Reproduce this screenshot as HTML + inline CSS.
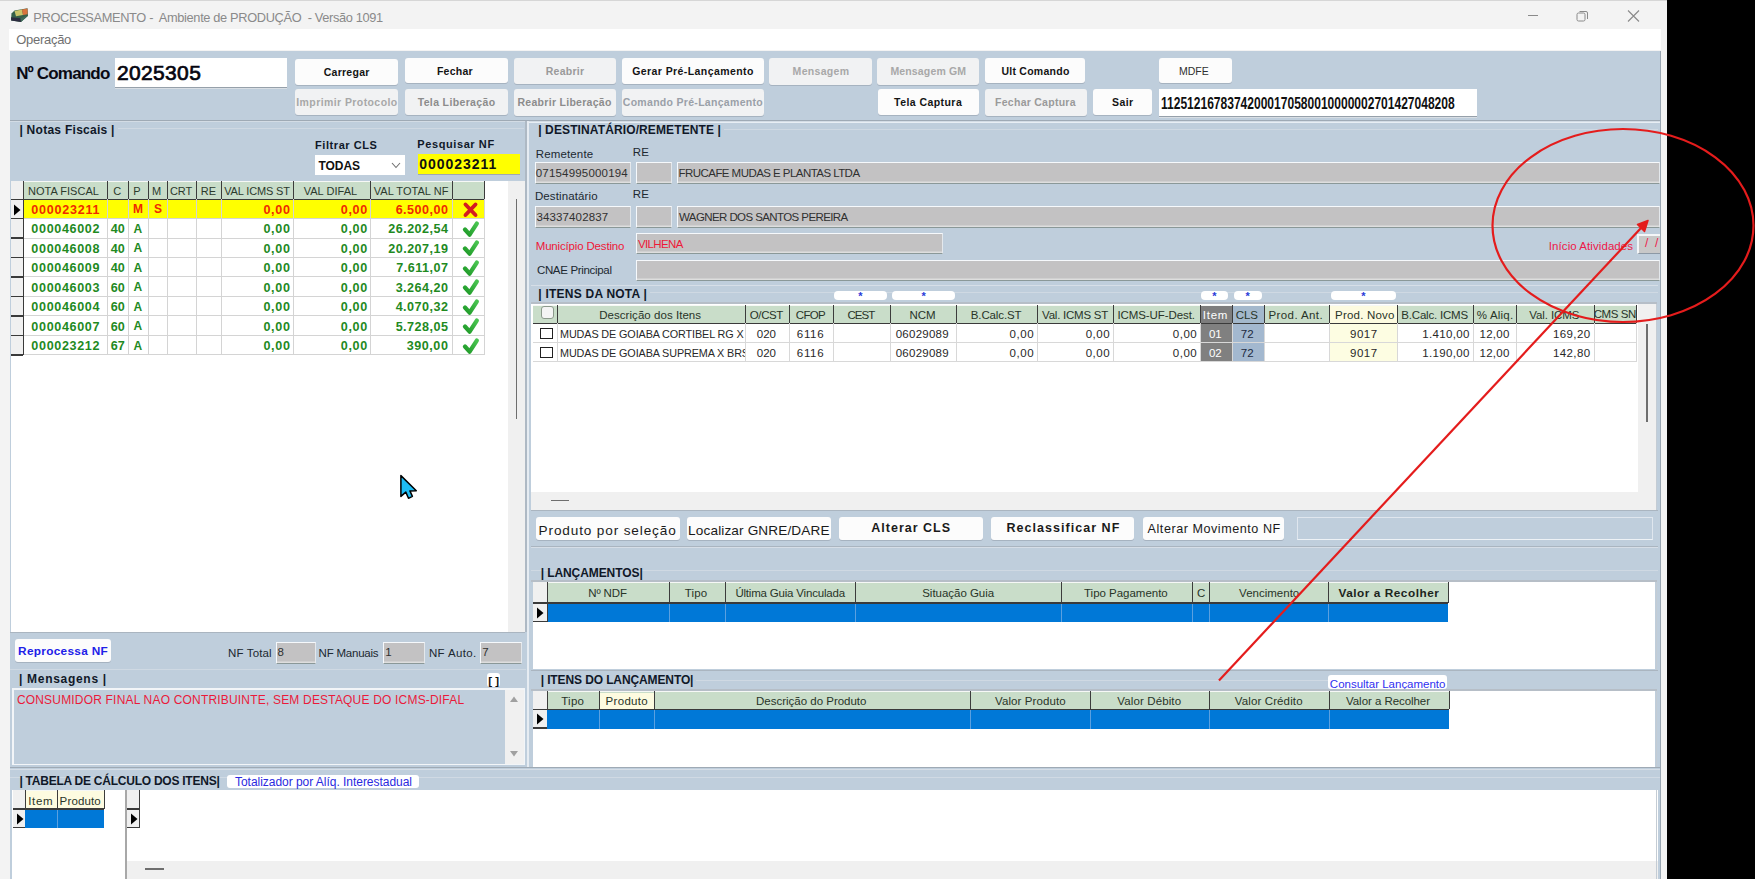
<!DOCTYPE html><html><head><meta charset="utf-8"><style>
html,body{margin:0;padding:0;}
body{width:1755px;height:879px;position:relative;overflow:hidden;background:#000;font-family:"Liberation Sans",sans-serif;}
.a{position:absolute;box-sizing:border-box;}
.t{position:absolute;white-space:pre;}
</style></head><body>
<div class="a" style="left:0px;top:0px;width:1667px;height:879px;background:#f3f3f3;"></div>
<div class="a" style="left:0px;top:0px;width:1667px;height:1px;background:#d6d6d6;"></div>
<div class="a" style="left:1667px;top:0px;width:88px;height:879px;background:#000;"></div>
<svg class="a" style="left:0px;top:0px" width="34" height="26" viewBox="0 0 34 26">
<path d="M11.5 13.5 L14.5 10.5 L27.5 8.3 L28 16 L21 22 L11 20.5 Z" fill="#36604a"/>
<path d="M14.5 11 L22 9.6 L23 15 L16 16.2 Z" fill="#c9c46a"/>
<path d="M22 9.6 L27.5 8.4 L27.6 14.2 L23 15 Z" fill="#d8733c"/>
<path d="M11 17.2 L20.5 18.2 L21 22 L11.2 20.6 Z" fill="#2c2c40"/>
<path d="M20.5 18.2 L27.8 15.5 L21 22 Z" fill="#3f6a5a"/>
</svg>
<span class="t" id="t0" style="left:33.36px;top:10.81px;font-size:12.8px;line-height:14.298px;font-weight:normal;color:#8a8a8a;letter-spacing:-0.345px;white-space:pre;">PROCESSAMENTO -  Ambiente de PRODUÇÃO  - Versão 1091</span>
<div class="a" style="left:1527.5px;top:15px;width:10.5px;height:1px;background:#8a8a8a;"></div>
<svg class="a" style="left:1576px;top:10px" width="13" height="12" viewBox="0 0 13 12"><rect x="1" y="3" width="8" height="8" rx="1.5" fill="none" stroke="#8a8a8a" stroke-width="1"/><path d="M3.5 1.5 H10 a1.5 1.5 0 0 1 1.5 1.5 V9" fill="none" stroke="#8a8a8a" stroke-width="1"/></svg>
<svg class="a" style="left:1627px;top:10px" width="13" height="12" viewBox="0 0 13 12"><path d="M1 0.5 L12 11.5 M12 0.5 L1 11.5" stroke="#8a8a8a" stroke-width="1.1"/></svg>
<div class="a" style="left:9px;top:29px;width:1652px;height:21px;background:#ffffff;"></div>
<span class="t" id="t1" style="left:16.25px;top:32.93px;font-size:13px;line-height:14.521px;font-weight:normal;color:#707070;letter-spacing:-0.289px;">Operação</span>
<div class="a" style="left:10px;top:51px;width:1651px;height:828px;background:#bfcedc;"></div>
<div class="a" style="left:10px;top:120px;width:1651px;height:1px;background:#9faab5;"></div>
<div class="a" style="left:10px;top:121px;width:1651px;height:1px;background:#d3dce5;"></div>
<span class="t" id="t2" style="left:16.15px;top:64.11px;font-size:17px;line-height:18.989px;font-weight:bold;color:#0a0a14;letter-spacing:-0.829px;">Nº Comando</span>
<div class="a" style="left:114.8px;top:57.7px;width:172.7px;height:30.5px;background:#ffffff;border-bottom:1px solid #96a0aa;box-shadow:0 1px 0 #d8dee4;"></div>
<span class="t" id="t3" style="left:116.95px;top:61.39px;font-size:21px;line-height:23.457px;font-weight:normal;color:#050510;letter-spacing:0.354px;-webkit-text-stroke:0.7px #050510;">2025305</span>
<div class="a" style="left:295.2px;top:59px;width:102.90000000000003px;height:25.5px;background:#fcfcfc;border-radius:3px;box-shadow:0 1px 0 rgba(120,130,140,0.35);"></div>
<span class="t" id="t4" style="left:323.78px;top:66.99px;font-size:10.5px;line-height:11.729px;font-weight:bold;color:#141414;letter-spacing:0.252px;">Carregar</span>
<div class="a" style="left:405px;top:58.3px;width:102.80000000000001px;height:24.900000000000006px;background:#fcfcfc;border-radius:3px;box-shadow:0 1px 0 rgba(120,130,140,0.35);"></div>
<span class="t" id="t5" style="left:436.88px;top:66.29px;font-size:10.5px;line-height:11.729px;font-weight:bold;color:#141414;letter-spacing:0.262px;">Fechar</span>
<div class="a" style="left:513.7px;top:57.7px;width:102.19999999999993px;height:26.200000000000003px;background:#f1f2f3;border-radius:3px;box-shadow:0 1px 0 rgba(120,130,140,0.35);"></div>
<span class="t" id="t6" style="left:545.77px;top:66.29px;font-size:10.5px;line-height:11.729px;font-weight:bold;color:#9a9a9a;letter-spacing:0.247px;">Reabrir</span>
<div class="a" style="left:621.9px;top:58px;width:141.70000000000005px;height:25.900000000000006px;background:#fcfcfc;border-radius:3px;box-shadow:0 1px 0 rgba(120,130,140,0.35);"></div>
<span class="t" id="t7" style="left:632.18px;top:66.29px;font-size:10.5px;line-height:11.729px;font-weight:bold;color:#141414;letter-spacing:0.422px;">Gerar Pré-Lançamento</span>
<div class="a" style="left:769.4px;top:57.7px;width:102.30000000000007px;height:26.89999999999999px;background:#f1f2f3;border-radius:3px;box-shadow:0 1px 0 rgba(120,130,140,0.35);"></div>
<span class="t" id="t8" style="left:792.58px;top:66.29px;font-size:10.5px;line-height:11.729px;font-weight:bold;color:#a8a8a8;letter-spacing:0.323px;">Mensagem</span>
<div class="a" style="left:876.9px;top:57.7px;width:102.60000000000002px;height:26.89999999999999px;background:#f1f2f3;border-radius:3px;box-shadow:0 1px 0 rgba(120,130,140,0.35);"></div>
<span class="t" id="t9" style="left:890.38px;top:66.29px;font-size:10.5px;line-height:11.729px;font-weight:bold;color:#a8a8a8;letter-spacing:0.164px;">Mensagem GM</span>
<div class="a" style="left:985.2px;top:58.3px;width:100.0px;height:25.10000000000001px;background:#fcfcfc;border-radius:3px;box-shadow:0 1px 0 rgba(120,130,140,0.35);"></div>
<span class="t" id="t10" style="left:1001.38px;top:66.29px;font-size:10.5px;line-height:11.729px;font-weight:bold;color:#141414;letter-spacing:0.262px;">Ult Comando</span>
<div class="a" style="left:295.2px;top:88.8px;width:102.90000000000003px;height:26.5px;background:#f1f2f3;border-radius:3px;box-shadow:0 1px 0 rgba(120,130,140,0.35);"></div>
<span class="t" id="t11" style="left:296.28px;top:97.19px;font-size:10.5px;line-height:11.729px;font-weight:bold;color:#a8a8a8;letter-spacing:0.412px;">Imprimir Protocolo</span>
<div class="a" style="left:405px;top:88.8px;width:102.80000000000001px;height:26.5px;background:#f1f2f3;border-radius:3px;box-shadow:0 1px 0 rgba(120,130,140,0.35);"></div>
<span class="t" id="t12" style="left:417.68px;top:97.19px;font-size:10.5px;line-height:11.729px;font-weight:bold;color:#8c8c8c;letter-spacing:0.360px;">Tela Liberação</span>
<div class="a" style="left:513.7px;top:89px;width:102.19999999999993px;height:26.700000000000003px;background:#f1f2f3;border-radius:3px;box-shadow:0 1px 0 rgba(120,130,140,0.35);"></div>
<span class="t" id="t13" style="left:517.48px;top:97.29px;font-size:10.5px;line-height:11.729px;font-weight:bold;color:#8c8c8c;letter-spacing:0.291px;">Reabrir Liberação</span>
<div class="a" style="left:621.9px;top:89px;width:141.70000000000005px;height:26.700000000000003px;background:#f1f2f3;border-radius:3px;box-shadow:0 1px 0 rgba(120,130,140,0.35);"></div>
<span class="t" id="t14" style="left:622.77px;top:97.29px;font-size:10.5px;line-height:11.729px;font-weight:bold;color:#9aa0a8;letter-spacing:0.302px;">Comando Pré-Lançamento</span>
<div class="a" style="left:877.9px;top:89.4px;width:100.89999999999998px;height:25.599999999999994px;background:#fcfcfc;border-radius:3px;box-shadow:0 1px 0 rgba(120,130,140,0.35);"></div>
<span class="t" id="t15" style="left:894.08px;top:97.39px;font-size:10.5px;line-height:11.729px;font-weight:bold;color:#141414;letter-spacing:0.438px;">Tela Captura</span>
<div class="a" style="left:985.2px;top:88.8px;width:101.5px;height:26.900000000000006px;background:#f1f2f3;border-radius:3px;box-shadow:0 1px 0 rgba(120,130,140,0.35);"></div>
<span class="t" id="t16" style="left:995.08px;top:97.39px;font-size:10.5px;line-height:11.729px;font-weight:bold;color:#9a9a9a;letter-spacing:0.263px;">Fechar Captura</span>
<div class="a" style="left:1092.9px;top:89.4px;width:59.0px;height:25.599999999999994px;background:#fcfcfc;border-radius:3px;box-shadow:0 1px 0 rgba(120,130,140,0.35);"></div>
<span class="t" id="t17" style="left:1112.07px;top:97.39px;font-size:10.5px;line-height:11.729px;font-weight:bold;color:#141414;letter-spacing:0.362px;">Sair</span>
<div class="a" style="left:1158.5px;top:58.3px;width:73.40000000000009px;height:25.10000000000001px;background:#fcfcfc;border-radius:3px;box-shadow:0 1px 0 rgba(120,130,140,0.35);"></div>
<span class="t" id="t18" style="left:1178.72px;top:65.39px;font-size:11.5px;line-height:12.845px;font-weight:normal;color:#303030;transform:scaleX(0.9126);transform-origin:0 0;">MDFE</span>
<div class="a" style="left:1158.7px;top:89px;width:318.29999999999995px;height:27.700000000000003px;background:#ffffff;border-bottom:1px solid #96a0aa;box-shadow:0 1px 0 #d8dee4;"></div>
<span class="t" id="t19" style="left:1161.20px;top:94.62px;font-size:16px;line-height:17.872px;font-weight:bold;color:#101010;transform:scaleX(0.7518);transform-origin:0 0;">11251216783742000170580010000002701427048208</span>
<span class="t" id="t20" style="left:19.40px;top:123.54px;font-size:12px;line-height:13.404px;font-weight:bold;color:#101828;letter-spacing:0.271px;">| Notas Fiscais |</span>
<div class="a" style="left:118px;top:128px;width:406px;height:1px;background:#cfd9e3;"></div>
<div class="a" style="left:527px;top:122px;width:1133px;height:1px;background:#e8eef4;"></div>
<span class="t" id="t21" style="left:315.05px;top:138.84px;font-size:11px;line-height:12.287px;font-weight:bold;color:#101828;letter-spacing:0.566px;">Filtrar CLS</span>
<span class="t" id="t22" style="left:417.35px;top:137.84px;font-size:11px;line-height:12.287px;font-weight:bold;color:#101828;letter-spacing:0.589px;">Pesquisar NF</span>
<div class="a" style="left:315px;top:155px;width:90px;height:20px;background:#ffffff;"></div>
<span class="t" id="t23" style="left:318.60px;top:159.54px;font-size:12px;line-height:13.404px;font-weight:bold;color:#101010;letter-spacing:-0.104px;">TODAS</span>
<svg class="a" style="left:391px;top:162px" width="10" height="7" viewBox="0 0 10 7"><path d="M1 1 L5 5.5 L9 1" fill="none" stroke="#707070" stroke-width="1.1"/></svg>
<div class="a" style="left:417.5px;top:153.5px;width:102.5px;height:21.5px;background:#ffff00;border-bottom:1px solid #a0a8b0;"></div>
<span class="t" id="t24" style="left:419.20px;top:156.93px;font-size:14px;line-height:15.638px;font-weight:bold;color:#101010;letter-spacing:0.981px;">000023211</span>
<div class="a" style="left:11px;top:180.5px;width:497px;height:451.0px;background:#ffffff;"></div>
<div class="a" style="left:508px;top:180.5px;width:17.299999999999955px;height:451.0px;background:#f0f0f0;"></div>
<div class="a" style="left:515.7px;top:199px;width:1.7000000000000455px;height:220px;background:#6e6e6e;"></div>
<div class="a" style="left:525.3px;top:121px;width:1.5px;height:510.5px;background:#aeb9c4;"></div>
<div class="a" style="left:527px;top:121px;width:2px;height:646px;background:#e6ecf2;"></div>
<div class="a" style="left:10.7px;top:180.5px;width:12.8px;height:174.0px;background:#f0f0f0;"></div>
<div class="a" style="left:23.5px;top:180.5px;width:460.5px;height:18.5px;background:#c9ddc9;border-top:1.5px solid #f6f8f6;"></div>
<div class="a" style="left:10.7px;top:198.5px;width:473.3px;height:1.5px;background:#3a3a3a;"></div>
<div class="a" style="left:23.0px;top:180.5px;width:1.1999999999999993px;height:18.5px;background:#3c3c3c;"></div>
<div class="a" style="left:107.0px;top:180.5px;width:1.2000000000000028px;height:18.5px;background:#3c3c3c;"></div>
<div class="a" style="left:127.5px;top:180.5px;width:1.1999999999999886px;height:18.5px;background:#3c3c3c;"></div>
<div class="a" style="left:147.5px;top:180.5px;width:1.1999999999999886px;height:18.5px;background:#3c3c3c;"></div>
<div class="a" style="left:167.0px;top:180.5px;width:1.1999999999999886px;height:18.5px;background:#3c3c3c;"></div>
<div class="a" style="left:196.0px;top:180.5px;width:1.1999999999999886px;height:18.5px;background:#3c3c3c;"></div>
<div class="a" style="left:220.5px;top:180.5px;width:1.1999999999999886px;height:18.5px;background:#3c3c3c;"></div>
<div class="a" style="left:293.0px;top:180.5px;width:1.1999999999999886px;height:18.5px;background:#3c3c3c;"></div>
<div class="a" style="left:370.0px;top:180.5px;width:1.1999999999999886px;height:18.5px;background:#3c3c3c;"></div>
<div class="a" style="left:451.5px;top:180.5px;width:1.1999999999999886px;height:18.5px;background:#3c3c3c;"></div>
<div class="a" style="left:483.5px;top:180.5px;width:1.1999999999999886px;height:18.5px;background:#3c3c3c;"></div>
<span class="t" id="t25" style="left:27.95px;top:185.44px;font-size:11px;line-height:12.287px;font-weight:normal;color:#2c3a2c;letter-spacing:0.029px;">NOTA FISCAL</span>
<span class="t" id="t26" style="left:113.27px;top:185.44px;font-size:11px;line-height:12.287px;font-weight:normal;color:#2c3a2c;letter-spacing:0.000px;">C</span>
<span class="t" id="t27" style="left:133.32px;top:185.44px;font-size:11px;line-height:12.287px;font-weight:normal;color:#2c3a2c;letter-spacing:0.000px;">P</span>
<span class="t" id="t28" style="left:151.91px;top:185.44px;font-size:11px;line-height:12.287px;font-weight:normal;color:#2c3a2c;letter-spacing:0.000px;">M</span>
<span class="t" id="t29" style="left:169.88px;top:185.44px;font-size:11px;line-height:12.287px;font-weight:normal;color:#2c3a2c;letter-spacing:0.000px;">CRT</span>
<span class="t" id="t30" style="left:200.75px;top:185.44px;font-size:11px;line-height:12.287px;font-weight:normal;color:#2c3a2c;letter-spacing:0.000px;">RE</span>
<span class="t" id="t31" style="left:224.25px;top:185.44px;font-size:11px;line-height:12.287px;font-weight:normal;color:#2c3a2c;letter-spacing:-0.156px;">VAL ICMS ST</span>
<span class="t" id="t32" style="left:303.65px;top:185.44px;font-size:11px;line-height:12.287px;font-weight:normal;color:#2c3a2c;letter-spacing:0.048px;">VAL DIFAL</span>
<span class="t" id="t33" style="left:373.75px;top:185.44px;font-size:11px;line-height:12.287px;font-weight:normal;color:#2c3a2c;letter-spacing:0.047px;">VAL TOTAL NF</span>
<div class="a" style="left:23.5px;top:199.5px;width:460.5px;height:18.639999999999986px;background:#ffff00;"></div>
<div class="a" style="left:23.5px;top:218.14px;width:460.5px;height:1.0px;background:#d4d4d4;"></div>
<div class="a" style="left:10.7px;top:217.94px;width:12.8px;height:1.5px;background:#3a3a3a;"></div>
<svg class="a" style="left:13px;top:203.5px" width="8" height="12" viewBox="0 0 8 12"><path d="M1 0.5 L7.5 6 L1 11.5 Z" fill="#000"/></svg>
<span class="t" id="t34" style="left:31.37px;top:202.89px;font-size:12.6px;line-height:14.074px;font-weight:bold;color:#f02a00;letter-spacing:0.724px;">000023211</span>
<span class="t" id="t35" style="left:133.09px;top:203.44px;font-size:12px;line-height:13.404px;font-weight:bold;color:#f02a00;letter-spacing:0.000px;">M</span>
<span class="t" id="t36" style="left:153.98px;top:203.44px;font-size:12px;line-height:13.404px;font-weight:bold;color:#f02a00;letter-spacing:0.000px;">S</span>
<span class="t" id="t37" style="left:263.45px;top:202.89px;font-size:12.6px;line-height:14.074px;font-weight:bold;color:#f02a00;letter-spacing:0.680px;">0,00</span>
<span class="t" id="t38" style="left:340.75px;top:202.89px;font-size:12.6px;line-height:14.074px;font-weight:bold;color:#f02a00;letter-spacing:0.680px;">0,00</span>
<span class="t" id="t39" style="left:395.63px;top:202.89px;font-size:12.6px;line-height:14.074px;font-weight:bold;color:#f02a00;letter-spacing:0.463px;">6.500,00</span>
<svg class="a" style="left:460px;top:199.5px" width="20" height="20" viewBox="0 0 20 20"><path d="M5.5 4.5 L15.5 15 M15.5 4.5 L5.5 15" stroke="#d41c20" stroke-width="3.9" stroke-linecap="round"/></svg>
<div class="a" style="left:23.5px;top:237.57999999999998px;width:460.5px;height:1.0px;background:#d4d4d4;"></div>
<div class="a" style="left:10.7px;top:237.38px;width:12.8px;height:1.5px;background:#3a3a3a;"></div>
<span class="t" id="t40" style="left:31.37px;top:222.33px;font-size:12.6px;line-height:14.074px;font-weight:bold;color:#1f8a1f;letter-spacing:0.636px;">000046002</span>
<span class="t" id="t41" style="left:110.73px;top:222.33px;font-size:12.6px;line-height:14.074px;font-weight:bold;color:#1f8a1f;letter-spacing:0.000px;">40</span>
<span class="t" id="t42" style="left:133.50px;top:222.88px;font-size:12px;line-height:13.404px;font-weight:bold;color:#1f8a1f;letter-spacing:0.000px;">A</span>
<span class="t" id="t43" style="left:263.45px;top:222.33px;font-size:12.6px;line-height:14.074px;font-weight:bold;color:#1f8a1f;letter-spacing:0.680px;">0,00</span>
<span class="t" id="t44" style="left:340.75px;top:222.33px;font-size:12.6px;line-height:14.074px;font-weight:bold;color:#1f8a1f;letter-spacing:0.680px;">0,00</span>
<span class="t" id="t45" style="left:388.32px;top:222.33px;font-size:12.6px;line-height:14.074px;font-weight:bold;color:#1f8a1f;letter-spacing:0.444px;">26.202,54</span>
<svg class="a" style="left:460px;top:218.9px" width="20" height="20" viewBox="0 0 20 20"><defs><linearGradient id="gk1" x1="0" y1="1" x2="1" y2="0"><stop offset="0" stop-color="#1f9a28"/><stop offset="1" stop-color="#48c450"/></linearGradient></defs><path d="M5 10.5 L9.6 15.6 L16.8 4.6" fill="none" stroke="url(#gk1)" stroke-width="4.3" stroke-linecap="round" stroke-linejoin="round"/></svg>
<div class="a" style="left:23.5px;top:257.02px;width:460.5px;height:1.0px;background:#d4d4d4;"></div>
<div class="a" style="left:10.7px;top:256.82px;width:12.8px;height:1.5px;background:#3a3a3a;"></div>
<span class="t" id="t46" style="left:31.37px;top:241.77px;font-size:12.6px;line-height:14.074px;font-weight:bold;color:#1f8a1f;letter-spacing:0.636px;">000046008</span>
<span class="t" id="t47" style="left:110.73px;top:241.77px;font-size:12.6px;line-height:14.074px;font-weight:bold;color:#1f8a1f;letter-spacing:0.000px;">40</span>
<span class="t" id="t48" style="left:133.50px;top:242.32px;font-size:12px;line-height:13.404px;font-weight:bold;color:#1f8a1f;letter-spacing:0.000px;">A</span>
<span class="t" id="t49" style="left:263.45px;top:241.77px;font-size:12.6px;line-height:14.074px;font-weight:bold;color:#1f8a1f;letter-spacing:0.680px;">0,00</span>
<span class="t" id="t50" style="left:340.75px;top:241.77px;font-size:12.6px;line-height:14.074px;font-weight:bold;color:#1f8a1f;letter-spacing:0.680px;">0,00</span>
<span class="t" id="t51" style="left:388.32px;top:241.77px;font-size:12.6px;line-height:14.074px;font-weight:bold;color:#1f8a1f;letter-spacing:0.444px;">20.207,19</span>
<svg class="a" style="left:460px;top:238.4px" width="20" height="20" viewBox="0 0 20 20"><defs><linearGradient id="gk2" x1="0" y1="1" x2="1" y2="0"><stop offset="0" stop-color="#1f9a28"/><stop offset="1" stop-color="#48c450"/></linearGradient></defs><path d="M5 10.5 L9.6 15.6 L16.8 4.6" fill="none" stroke="url(#gk2)" stroke-width="4.3" stroke-linecap="round" stroke-linejoin="round"/></svg>
<div class="a" style="left:23.5px;top:276.46px;width:460.5px;height:1.0px;background:#d4d4d4;"></div>
<div class="a" style="left:10.7px;top:276.26px;width:12.8px;height:1.5px;background:#3a3a3a;"></div>
<span class="t" id="t52" style="left:31.37px;top:261.21px;font-size:12.6px;line-height:14.074px;font-weight:bold;color:#1f8a1f;letter-spacing:0.636px;">000046009</span>
<span class="t" id="t53" style="left:110.73px;top:261.21px;font-size:12.6px;line-height:14.074px;font-weight:bold;color:#1f8a1f;letter-spacing:0.000px;">40</span>
<span class="t" id="t54" style="left:133.50px;top:261.76px;font-size:12px;line-height:13.404px;font-weight:bold;color:#1f8a1f;letter-spacing:0.000px;">A</span>
<span class="t" id="t55" style="left:263.45px;top:261.21px;font-size:12.6px;line-height:14.074px;font-weight:bold;color:#1f8a1f;letter-spacing:0.680px;">0,00</span>
<span class="t" id="t56" style="left:340.75px;top:261.21px;font-size:12.6px;line-height:14.074px;font-weight:bold;color:#1f8a1f;letter-spacing:0.680px;">0,00</span>
<span class="t" id="t57" style="left:396.32px;top:261.21px;font-size:12.6px;line-height:14.074px;font-weight:bold;color:#1f8a1f;letter-spacing:0.465px;">7.611,07</span>
<svg class="a" style="left:460px;top:257.8px" width="20" height="20" viewBox="0 0 20 20"><defs><linearGradient id="gk3" x1="0" y1="1" x2="1" y2="0"><stop offset="0" stop-color="#1f9a28"/><stop offset="1" stop-color="#48c450"/></linearGradient></defs><path d="M5 10.5 L9.6 15.6 L16.8 4.6" fill="none" stroke="url(#gk3)" stroke-width="4.3" stroke-linecap="round" stroke-linejoin="round"/></svg>
<div class="a" style="left:23.5px;top:295.9px;width:460.5px;height:1.0px;background:#d4d4d4;"></div>
<div class="a" style="left:10.7px;top:295.7px;width:12.8px;height:1.5px;background:#3a3a3a;"></div>
<span class="t" id="t58" style="left:31.37px;top:280.65px;font-size:12.6px;line-height:14.074px;font-weight:bold;color:#1f8a1f;letter-spacing:0.636px;">000046003</span>
<span class="t" id="t59" style="left:110.73px;top:280.65px;font-size:12.6px;line-height:14.074px;font-weight:bold;color:#1f8a1f;letter-spacing:0.000px;">60</span>
<span class="t" id="t60" style="left:133.50px;top:281.20px;font-size:12px;line-height:13.404px;font-weight:bold;color:#1f8a1f;letter-spacing:0.000px;">A</span>
<span class="t" id="t61" style="left:263.45px;top:280.65px;font-size:12.6px;line-height:14.074px;font-weight:bold;color:#1f8a1f;letter-spacing:0.680px;">0,00</span>
<span class="t" id="t62" style="left:340.75px;top:280.65px;font-size:12.6px;line-height:14.074px;font-weight:bold;color:#1f8a1f;letter-spacing:0.680px;">0,00</span>
<span class="t" id="t63" style="left:395.63px;top:280.65px;font-size:12.6px;line-height:14.074px;font-weight:bold;color:#1f8a1f;letter-spacing:0.463px;">3.264,20</span>
<svg class="a" style="left:460px;top:277.3px" width="20" height="20" viewBox="0 0 20 20"><defs><linearGradient id="gk4" x1="0" y1="1" x2="1" y2="0"><stop offset="0" stop-color="#1f9a28"/><stop offset="1" stop-color="#48c450"/></linearGradient></defs><path d="M5 10.5 L9.6 15.6 L16.8 4.6" fill="none" stroke="url(#gk4)" stroke-width="4.3" stroke-linecap="round" stroke-linejoin="round"/></svg>
<div class="a" style="left:23.5px;top:315.34px;width:460.5px;height:1.0px;background:#d4d4d4;"></div>
<div class="a" style="left:10.7px;top:315.14px;width:12.8px;height:1.5px;background:#3a3a3a;"></div>
<span class="t" id="t64" style="left:31.37px;top:300.09px;font-size:12.6px;line-height:14.074px;font-weight:bold;color:#1f8a1f;letter-spacing:0.636px;">000046004</span>
<span class="t" id="t65" style="left:110.73px;top:300.09px;font-size:12.6px;line-height:14.074px;font-weight:bold;color:#1f8a1f;letter-spacing:0.000px;">60</span>
<span class="t" id="t66" style="left:133.50px;top:300.64px;font-size:12px;line-height:13.404px;font-weight:bold;color:#1f8a1f;letter-spacing:0.000px;">A</span>
<span class="t" id="t67" style="left:263.45px;top:300.09px;font-size:12.6px;line-height:14.074px;font-weight:bold;color:#1f8a1f;letter-spacing:0.680px;">0,00</span>
<span class="t" id="t68" style="left:340.75px;top:300.09px;font-size:12.6px;line-height:14.074px;font-weight:bold;color:#1f8a1f;letter-spacing:0.680px;">0,00</span>
<span class="t" id="t69" style="left:395.63px;top:300.09px;font-size:12.6px;line-height:14.074px;font-weight:bold;color:#1f8a1f;letter-spacing:0.463px;">4.070,32</span>
<svg class="a" style="left:460px;top:296.7px" width="20" height="20" viewBox="0 0 20 20"><defs><linearGradient id="gk5" x1="0" y1="1" x2="1" y2="0"><stop offset="0" stop-color="#1f9a28"/><stop offset="1" stop-color="#48c450"/></linearGradient></defs><path d="M5 10.5 L9.6 15.6 L16.8 4.6" fill="none" stroke="url(#gk5)" stroke-width="4.3" stroke-linecap="round" stroke-linejoin="round"/></svg>
<div class="a" style="left:23.5px;top:334.78px;width:460.5px;height:1.0px;background:#d4d4d4;"></div>
<div class="a" style="left:10.7px;top:334.58px;width:12.8px;height:1.5px;background:#3a3a3a;"></div>
<span class="t" id="t70" style="left:31.37px;top:319.53px;font-size:12.6px;line-height:14.074px;font-weight:bold;color:#1f8a1f;letter-spacing:0.636px;">000046007</span>
<span class="t" id="t71" style="left:110.73px;top:319.53px;font-size:12.6px;line-height:14.074px;font-weight:bold;color:#1f8a1f;letter-spacing:0.000px;">60</span>
<span class="t" id="t72" style="left:133.50px;top:320.08px;font-size:12px;line-height:13.404px;font-weight:bold;color:#1f8a1f;letter-spacing:0.000px;">A</span>
<span class="t" id="t73" style="left:263.45px;top:319.53px;font-size:12.6px;line-height:14.074px;font-weight:bold;color:#1f8a1f;letter-spacing:0.680px;">0,00</span>
<span class="t" id="t74" style="left:340.75px;top:319.53px;font-size:12.6px;line-height:14.074px;font-weight:bold;color:#1f8a1f;letter-spacing:0.680px;">0,00</span>
<span class="t" id="t75" style="left:395.63px;top:319.53px;font-size:12.6px;line-height:14.074px;font-weight:bold;color:#1f8a1f;letter-spacing:0.463px;">5.728,05</span>
<svg class="a" style="left:460px;top:316.1px" width="20" height="20" viewBox="0 0 20 20"><defs><linearGradient id="gk6" x1="0" y1="1" x2="1" y2="0"><stop offset="0" stop-color="#1f9a28"/><stop offset="1" stop-color="#48c450"/></linearGradient></defs><path d="M5 10.5 L9.6 15.6 L16.8 4.6" fill="none" stroke="url(#gk6)" stroke-width="4.3" stroke-linecap="round" stroke-linejoin="round"/></svg>
<div class="a" style="left:23.5px;top:354.22px;width:460.5px;height:1.0px;background:#d4d4d4;"></div>
<div class="a" style="left:10.7px;top:354.02000000000004px;width:12.8px;height:1.5px;background:#3a3a3a;"></div>
<span class="t" id="t76" style="left:31.37px;top:338.97px;font-size:12.6px;line-height:14.074px;font-weight:bold;color:#1f8a1f;letter-spacing:0.636px;">000023212</span>
<span class="t" id="t77" style="left:110.73px;top:338.97px;font-size:12.6px;line-height:14.074px;font-weight:bold;color:#1f8a1f;letter-spacing:0.000px;">67</span>
<span class="t" id="t78" style="left:133.50px;top:339.52px;font-size:12px;line-height:13.404px;font-weight:bold;color:#1f8a1f;letter-spacing:0.000px;">A</span>
<span class="t" id="t79" style="left:263.45px;top:338.97px;font-size:12.6px;line-height:14.074px;font-weight:bold;color:#1f8a1f;letter-spacing:0.680px;">0,00</span>
<span class="t" id="t80" style="left:340.75px;top:338.97px;font-size:12.6px;line-height:14.074px;font-weight:bold;color:#1f8a1f;letter-spacing:0.680px;">0,00</span>
<span class="t" id="t81" style="left:406.74px;top:338.97px;font-size:12.6px;line-height:14.074px;font-weight:bold;color:#1f8a1f;letter-spacing:0.527px;">390,00</span>
<svg class="a" style="left:460px;top:335.6px" width="20" height="20" viewBox="0 0 20 20"><defs><linearGradient id="gk7" x1="0" y1="1" x2="1" y2="0"><stop offset="0" stop-color="#1f9a28"/><stop offset="1" stop-color="#48c450"/></linearGradient></defs><path d="M5 10.5 L9.6 15.6 L16.8 4.6" fill="none" stroke="url(#gk7)" stroke-width="4.3" stroke-linecap="round" stroke-linejoin="round"/></svg>
<div class="a" style="left:107.0px;top:199px;width:1.0px;height:155.5px;background:#d4d4d4;"></div>
<div class="a" style="left:127.5px;top:199px;width:1.0px;height:155.5px;background:#d4d4d4;"></div>
<div class="a" style="left:147.5px;top:199px;width:1.0px;height:155.5px;background:#d4d4d4;"></div>
<div class="a" style="left:167.0px;top:199px;width:1.0px;height:155.5px;background:#d4d4d4;"></div>
<div class="a" style="left:196.0px;top:199px;width:1.0px;height:155.5px;background:#d4d4d4;"></div>
<div class="a" style="left:220.5px;top:199px;width:1.0px;height:155.5px;background:#d4d4d4;"></div>
<div class="a" style="left:293.0px;top:199px;width:1.0px;height:155.5px;background:#d4d4d4;"></div>
<div class="a" style="left:370.0px;top:199px;width:1.0px;height:155.5px;background:#d4d4d4;"></div>
<div class="a" style="left:451.5px;top:199px;width:1.0px;height:155.5px;background:#d4d4d4;"></div>
<div class="a" style="left:483.5px;top:199px;width:1.0px;height:155.5px;background:#d4d4d4;"></div>
<div class="a" style="left:23px;top:199px;width:1.1999999999999993px;height:155.5px;background:#3a3a3a;"></div>
<div class="a" style="left:10px;top:631.5px;width:515.3px;height:1.0px;background:#aab5c0;"></div>
<div class="a" style="left:14.5px;top:638.7px;width:96.5px;height:23.59999999999991px;background:#fcfcfc;border-radius:3px;box-shadow:0 1px 0 rgba(120,130,140,0.35);"></div>
<span class="t" id="t82" style="left:18.11px;top:645.42px;font-size:11.8px;line-height:13.181px;font-weight:bold;color:#2020e8;letter-spacing:0.306px;">Reprocessa NF</span>
<span class="t" id="t83" style="left:228.03px;top:646.59px;font-size:11.5px;line-height:12.845px;font-weight:normal;color:#202830;letter-spacing:0.147px;">NF Total</span>
<div class="a" style="left:275.5px;top:641.7px;width:40.19999999999999px;height:22.299999999999955px;background:#c3c2c3;border-top:1.6px solid #f6f9fc;border-left:1.6px solid #f6f9fc;border-bottom:1px solid #8a9898;border-right:1px solid #e4e8ec;box-shadow:inset 0 -1.5px 0 #dedede;"></div>
<span class="t" id="t84" style="left:277.39px;top:645.89px;font-size:11.5px;line-height:12.845px;font-weight:normal;color:#303030;letter-spacing:0.000px;">8</span>
<span class="t" id="t85" style="left:318.62px;top:646.59px;font-size:11.5px;line-height:12.845px;font-weight:normal;color:#202830;letter-spacing:-0.229px;">NF Manuais</span>
<div class="a" style="left:383px;top:641.7px;width:42.39999999999998px;height:22.299999999999955px;background:#c3c2c3;border-top:1.6px solid #f6f9fc;border-left:1.6px solid #f6f9fc;border-bottom:1px solid #8a9898;border-right:1px solid #e4e8ec;box-shadow:inset 0 -1.5px 0 #dedede;"></div>
<span class="t" id="t86" style="left:385.24px;top:645.89px;font-size:11.5px;line-height:12.845px;font-weight:normal;color:#303030;letter-spacing:0.000px;">1</span>
<span class="t" id="t87" style="left:428.93px;top:646.59px;font-size:11.5px;line-height:12.845px;font-weight:normal;color:#202830;letter-spacing:0.355px;">NF Auto.</span>
<div class="a" style="left:479.8px;top:641.7px;width:41.900000000000034px;height:22.299999999999955px;background:#c3c2c3;border-top:1.6px solid #f6f9fc;border-left:1.6px solid #f6f9fc;border-bottom:1px solid #8a9898;border-right:1px solid #e4e8ec;box-shadow:inset 0 -1.5px 0 #dedede;"></div>
<span class="t" id="t88" style="left:482.24px;top:645.89px;font-size:11.5px;line-height:12.845px;font-weight:normal;color:#303030;letter-spacing:0.000px;">7</span>
<div class="a" style="left:10px;top:668.5px;width:516px;height:1.0px;background:#cfd9e3;"></div>
<span class="t" id="t89" style="left:19.00px;top:673.34px;font-size:12px;line-height:13.404px;font-weight:bold;color:#101828;letter-spacing:0.702px;">| Mensagens |</span>
<div class="a" style="left:487px;top:672.7px;width:13px;height:14.099999999999909px;background:#ffffff;border-radius:3px;"></div>
<span class="t" id="t90" style="left:488.26px;top:674.89px;font-size:11.5px;line-height:12.845px;font-weight:bold;color:#101010;letter-spacing:0.000px;white-space:pre;">[ ]</span>
<div class="a" style="left:12px;top:688px;width:513px;height:77px;background:#f2f5f8;"></div>
<div class="a" style="left:13.5px;top:689.5px;width:491.0px;height:74.5px;background:#bfcedc;"></div>
<div class="a" style="left:504.5px;top:689.5px;width:19.5px;height:74.5px;background:#f0f0f0;"></div>
<svg class="a" style="left:509px;top:695px" width="10" height="8" viewBox="0 0 10 8"><path d="M1 7 L5 1.5 L9 7 Z" fill="#a0a0a0"/></svg>
<svg class="a" style="left:509px;top:750px" width="10" height="8" viewBox="0 0 10 8"><path d="M1 1 L5 6.5 L9 1 Z" fill="#a0a0a0"/></svg>
<span class="t" id="t91" style="left:16.90px;top:693.94px;font-size:12px;line-height:13.404px;font-weight:normal;color:#ea1a3a;letter-spacing:0.186px;">CONSUMIDOR FINAL NAO CONTRIBUINTE, SEM DESTAQUE DO ICMS-DIFAL</span>
<div class="a" style="left:1659.5px;top:51px;width:1.2000000000000455px;height:828px;background:#9aa6b2;"></div>
<span class="t" id="t92" style="left:538.20px;top:124.44px;font-size:12px;line-height:13.404px;font-weight:bold;color:#101828;letter-spacing:0.117px;">| DESTINATÁRIO/REMETENTE |</span>
<div class="a" style="left:724px;top:129px;width:934px;height:1px;background:#cfd9e3;"></div>
<span class="t" id="t93" style="left:535.72px;top:148.49px;font-size:11.5px;line-height:12.845px;font-weight:normal;color:#202830;letter-spacing:0.146px;">Remetente</span>
<span class="t" id="t94" style="left:632.85px;top:146.29px;font-size:11.5px;line-height:12.845px;font-weight:normal;color:#202830;letter-spacing:0.000px;">RE</span>
<div class="a" style="left:534.5px;top:162px;width:96.5px;height:21.5px;background:#c3c2c3;border-top:1.6px solid #f6f9fc;border-left:1.6px solid #f6f9fc;border-bottom:1px solid #8a9898;border-right:1px solid #e4e8ec;box-shadow:inset 0 -1.5px 0 #dedede;"></div>
<div class="a" style="left:636px;top:162px;width:36px;height:21.5px;background:#c3c2c3;border-top:1.6px solid #f6f9fc;border-left:1.6px solid #f6f9fc;border-bottom:1px solid #8a9898;border-right:1px solid #e4e8ec;box-shadow:inset 0 -1.5px 0 #dedede;"></div>
<div class="a" style="left:677px;top:162px;width:983px;height:21.5px;background:#c3c2c3;border-top:1.6px solid #f6f9fc;border-left:1.6px solid #f6f9fc;border-bottom:1px solid #8a9898;border-right:1px solid #e4e8ec;box-shadow:inset 0 -1.5px 0 #dedede;"></div>
<span class="t" id="t95" style="left:535.72px;top:166.79px;font-size:11.5px;line-height:12.845px;font-weight:normal;color:#303030;letter-spacing:0.191px;">07154995000194</span>
<span class="t" id="t96" style="left:678.52px;top:166.79px;font-size:11.5px;line-height:12.845px;font-weight:normal;color:#303030;letter-spacing:-0.550px;">FRUCAFE MUDAS E PLANTAS LTDA</span>
<span class="t" id="t97" style="left:534.92px;top:190.09px;font-size:11.5px;line-height:12.845px;font-weight:normal;color:#202830;letter-spacing:0.124px;">Destinatário</span>
<span class="t" id="t98" style="left:632.85px;top:188.09px;font-size:11.5px;line-height:12.845px;font-weight:normal;color:#202830;letter-spacing:0.000px;">RE</span>
<div class="a" style="left:534.5px;top:206px;width:96.5px;height:21.5px;background:#c3c2c3;border-top:1.6px solid #f6f9fc;border-left:1.6px solid #f6f9fc;border-bottom:1px solid #8a9898;border-right:1px solid #e4e8ec;box-shadow:inset 0 -1.5px 0 #dedede;"></div>
<div class="a" style="left:636px;top:206px;width:36px;height:21.5px;background:#c3c2c3;border-top:1.6px solid #f6f9fc;border-left:1.6px solid #f6f9fc;border-bottom:1px solid #8a9898;border-right:1px solid #e4e8ec;box-shadow:inset 0 -1.5px 0 #dedede;"></div>
<div class="a" style="left:677px;top:206px;width:983px;height:21.5px;background:#c3c2c3;border-top:1.6px solid #f6f9fc;border-left:1.6px solid #f6f9fc;border-bottom:1px solid #8a9898;border-right:1px solid #e4e8ec;box-shadow:inset 0 -1.5px 0 #dedede;"></div>
<span class="t" id="t99" style="left:536.42px;top:210.69px;font-size:11.5px;line-height:12.845px;font-weight:normal;color:#303030;letter-spacing:0.138px;">34337402837</span>
<span class="t" id="t100" style="left:679.02px;top:210.69px;font-size:11.5px;line-height:12.845px;font-weight:normal;color:#303030;letter-spacing:-0.590px;">WAGNER DOS SANTOS PEREIRA</span>
<span class="t" id="t101" style="left:535.72px;top:240.19px;font-size:11.5px;line-height:12.845px;font-weight:normal;color:#ee1838;letter-spacing:-0.167px;">Município Destino</span>
<div class="a" style="left:636px;top:232.5px;width:306.5px;height:21.5px;background:#c3c2c3;border-top:1.6px solid #f6f9fc;border-left:1.6px solid #f6f9fc;border-bottom:1px solid #8a9898;border-right:1px solid #e4e8ec;box-shadow:inset 0 -1.5px 0 #dedede;"></div>
<span class="t" id="t102" style="left:637.92px;top:237.69px;font-size:11.5px;line-height:12.845px;font-weight:normal;color:#ee1838;letter-spacing:-0.631px;">VILHENA</span>
<span class="t" id="t103" style="left:1548.83px;top:239.69px;font-size:11.5px;line-height:12.845px;font-weight:normal;color:#ee1848;letter-spacing:0.070px;">Início Atividades</span>
<div class="a" style="left:1637px;top:233.6px;width:23px;height:20px;overflow:hidden;"><div class="a" style="left:0;top:0;width:30px;height:20px;background:#c8c8c8;border-top:2px solid #f4f6f8;border-left:2px solid #f4f6f8;border-bottom:1px solid #8d99a5;"></div><span class="t" style="left:8px;top:3px;font-size:12px;line-height:13.4px;color:#ee1848;">/</span><span class="t" style="left:18px;top:3px;font-size:12px;line-height:13.4px;color:#ee1848;">/</span></div>
<span class="t" id="t104" style="left:536.92px;top:263.79px;font-size:11.5px;line-height:12.845px;font-weight:normal;color:#202830;letter-spacing:-0.324px;">CNAE Principal</span>
<div class="a" style="left:636px;top:260px;width:1024px;height:21px;background:#c3c2c3;border-top:1.6px solid #f6f9fc;border-left:1.6px solid #f6f9fc;border-bottom:1px solid #8a9898;border-right:1px solid #e4e8ec;box-shadow:inset 0 -1.5px 0 #dedede;"></div>
<div class="a" style="left:531px;top:284.5px;width:1127px;height:1.0px;background:#d6dee7;"></div>
<span class="t" id="t105" style="left:538.30px;top:287.94px;font-size:12px;line-height:13.404px;font-weight:bold;color:#101828;letter-spacing:0.228px;">| ITENS DA NOTA |</span>
<div class="a" style="left:650px;top:292px;width:1008px;height:1px;background:#cfd9e3;"></div>
<div class="a" style="left:833.7px;top:290.7px;width:53.299999999999955px;height:9.0px;background:#ffffff;border-radius:4px;"></div>
<span class="t" id="t106" style="left:858.15px;top:290.34px;font-size:11px;line-height:12.287px;font-weight:bold;color:#2a3ad8;letter-spacing:0.000px;">*</span>
<div class="a" style="left:892px;top:290.7px;width:63.39999999999998px;height:9.0px;background:#ffffff;border-radius:4px;"></div>
<span class="t" id="t107" style="left:921.50px;top:290.34px;font-size:11px;line-height:12.287px;font-weight:bold;color:#2a3ad8;letter-spacing:0.000px;">*</span>
<div class="a" style="left:1201px;top:290.7px;width:27px;height:9.0px;background:#ffffff;border-radius:4px;"></div>
<span class="t" id="t108" style="left:1212.30px;top:290.34px;font-size:11px;line-height:12.287px;font-weight:bold;color:#2a3ad8;letter-spacing:0.000px;">*</span>
<div class="a" style="left:1233.6px;top:290.7px;width:28.0px;height:9.0px;background:#ffffff;border-radius:4px;"></div>
<span class="t" id="t109" style="left:1245.40px;top:290.34px;font-size:11px;line-height:12.287px;font-weight:bold;color:#2a3ad8;letter-spacing:0.000px;">*</span>
<div class="a" style="left:1330.6px;top:290.7px;width:65.80000000000018px;height:9.0px;background:#ffffff;border-radius:4px;"></div>
<span class="t" id="t110" style="left:1361.30px;top:290.34px;font-size:11px;line-height:12.287px;font-weight:bold;color:#2a3ad8;letter-spacing:0.000px;">*</span>
<div class="a" style="left:531px;top:301.5px;width:1126px;height:2.5px;background:#b6bec7;"></div>
<div class="a" style="left:531px;top:304px;width:1107px;height:187.5px;background:#ffffff;"></div>
<div class="a" style="left:1638px;top:304px;width:19px;height:187.5px;background:#f0f0f0;"></div>
<div class="a" style="left:1646px;top:323.7px;width:1.7000000000000455px;height:98.30000000000001px;background:#6e6e6e;"></div>
<div class="a" style="left:531px;top:491.5px;width:1126px;height:18.5px;background:#f0f0f0;"></div>
<div class="a" style="left:551px;top:499.5px;width:18px;height:1.6999999999999886px;background:#6e6e6e;"></div>
<div class="a" style="left:533px;top:304.6px;width:1103.4px;height:18.099999999999966px;background:#c9ddc9;border-top:1.5px solid #f6f8f6;"></div>
<div class="a" style="left:1200.6px;top:306.1px;width:31.40000000000009px;height:16.599999999999966px;background:#7d7d7d;"></div>
<div class="a" style="left:1232px;top:306.1px;width:32.40000000000009px;height:16.599999999999966px;background:#a3b8cc;"></div>
<div class="a" style="left:1329.7px;top:306.1px;width:67.89999999999986px;height:16.599999999999966px;background:#fdfbe0;"></div>
<div class="a" style="left:533px;top:322.5px;width:1103.4px;height:1.5px;background:#3a3a3a;"></div>
<div class="a" style="left:557.0px;top:304.6px;width:1.2000000000000455px;height:18.099999999999966px;background:#3c3c3c;"></div>
<div class="a" style="left:744.5px;top:304.6px;width:1.2000000000000455px;height:18.099999999999966px;background:#3c3c3c;"></div>
<div class="a" style="left:788.5px;top:304.6px;width:1.2000000000000455px;height:18.099999999999966px;background:#3c3c3c;"></div>
<div class="a" style="left:832.5px;top:304.6px;width:1.2000000000000455px;height:18.099999999999966px;background:#3c3c3c;"></div>
<div class="a" style="left:889.5px;top:304.6px;width:1.2000000000000455px;height:18.099999999999966px;background:#3c3c3c;"></div>
<div class="a" style="left:956.1px;top:304.6px;width:1.2000000000000455px;height:18.099999999999966px;background:#3c3c3c;"></div>
<div class="a" style="left:1036.5px;top:304.6px;width:1.2000000000000455px;height:18.099999999999966px;background:#3c3c3c;"></div>
<div class="a" style="left:1113.2px;top:304.6px;width:1.2000000000000455px;height:18.099999999999966px;background:#3c3c3c;"></div>
<div class="a" style="left:1200.1px;top:304.6px;width:1.2000000000000455px;height:18.099999999999966px;background:#3c3c3c;"></div>
<div class="a" style="left:1231.5px;top:304.6px;width:1.2000000000000455px;height:18.099999999999966px;background:#3c3c3c;"></div>
<div class="a" style="left:1263.9px;top:304.6px;width:1.2000000000000455px;height:18.099999999999966px;background:#3c3c3c;"></div>
<div class="a" style="left:1329.2px;top:304.6px;width:1.2000000000000455px;height:18.099999999999966px;background:#3c3c3c;"></div>
<div class="a" style="left:1397.1px;top:304.6px;width:1.2000000000000455px;height:18.099999999999966px;background:#3c3c3c;"></div>
<div class="a" style="left:1473.2px;top:304.6px;width:1.2000000000000455px;height:18.099999999999966px;background:#3c3c3c;"></div>
<div class="a" style="left:1516.2px;top:304.6px;width:1.2000000000000455px;height:18.099999999999966px;background:#3c3c3c;"></div>
<div class="a" style="left:1594.0px;top:304.6px;width:1.2000000000000455px;height:18.099999999999966px;background:#3c3c3c;"></div>
<div class="a" style="left:1635.9px;top:304.6px;width:1.2000000000000455px;height:18.099999999999966px;background:#3c3c3c;"></div>
<div class="a" style="left:541px;top:306px;width:13px;height:12.5px;background:#f4f4f4;border:1.5px solid #8c9a8c;border-radius:3px;"></div>
<span class="t" id="t111" style="left:599.22px;top:308.59px;font-size:11.5px;line-height:12.845px;font-weight:normal;color:#283428;letter-spacing:0.046px;">Descrição dos Itens</span>
<span class="t" id="t112" style="left:749.82px;top:308.59px;font-size:11.5px;line-height:12.845px;font-weight:normal;color:#283428;letter-spacing:-0.401px;">O/CST</span>
<span class="t" id="t113" style="left:795.82px;top:308.59px;font-size:11.5px;line-height:12.845px;font-weight:normal;color:#283428;letter-spacing:-0.706px;">CFOP</span>
<span class="t" id="t114" style="left:847.42px;top:308.59px;font-size:11.5px;line-height:12.845px;font-weight:normal;color:#283428;letter-spacing:-0.946px;">CEST</span>
<span class="t" id="t115" style="left:909.39px;top:308.59px;font-size:11.5px;line-height:12.845px;font-weight:normal;color:#283428;letter-spacing:0.000px;">NCM</span>
<span class="t" id="t116" style="left:970.82px;top:308.59px;font-size:11.5px;line-height:12.845px;font-weight:normal;color:#283428;letter-spacing:-0.129px;">B.Calc.ST</span>
<span class="t" id="t117" style="left:1042.12px;top:308.59px;font-size:11.5px;line-height:12.845px;font-weight:normal;color:#283428;letter-spacing:-0.243px;">Val. ICMS ST</span>
<span class="t" id="t118" style="left:1117.42px;top:308.59px;font-size:11.5px;line-height:12.845px;font-weight:normal;color:#283428;letter-spacing:-0.080px;">ICMS-UF-Dest.</span>
<span class="t" id="t119" style="left:1202.83px;top:308.59px;font-size:11.5px;line-height:12.845px;font-weight:normal;color:#ffffff;letter-spacing:0.720px;">Item</span>
<span class="t" id="t120" style="left:1235.65px;top:308.59px;font-size:11.5px;line-height:12.845px;font-weight:normal;color:#283428;letter-spacing:0.000px;">CLS</span>
<span class="t" id="t121" style="left:1268.52px;top:308.59px;font-size:11.5px;line-height:12.845px;font-weight:normal;color:#283428;letter-spacing:0.402px;">Prod. Ant.</span>
<span class="t" id="t122" style="left:1335.02px;top:308.59px;font-size:11.5px;line-height:12.845px;font-weight:normal;color:#283428;letter-spacing:0.212px;">Prod. Novo</span>
<span class="t" id="t123" style="left:1401.33px;top:308.59px;font-size:11.5px;line-height:12.845px;font-weight:normal;color:#283428;letter-spacing:-0.198px;">B.Calc. ICMS</span>
<span class="t" id="t124" style="left:1476.72px;top:308.59px;font-size:11.5px;line-height:12.845px;font-weight:normal;color:#283428;letter-spacing:0.211px;">% Aliq.</span>
<span class="t" id="t125" style="left:1529.33px;top:308.59px;font-size:11.5px;line-height:12.845px;font-weight:normal;color:#283428;letter-spacing:-0.111px;">Val. ICMS</span>
<div class="a" style="left:1594.5px;top:305px;width:41.9px;height:17.7px;overflow:hidden;"><span class="t" style="left:-3.5px;top:3.4px;font-size:11.5px;line-height:12.85px;color:#283428;letter-spacing:-0.45px;">ICMS SN</span></div>
<div class="a" style="left:1200.6px;top:323.5px;width:31.40000000000009px;height:19.399999999999977px;background:#808080;"></div>
<div class="a" style="left:1232px;top:323.5px;width:32.40000000000009px;height:19.399999999999977px;background:#a3b8cf;"></div>
<div class="a" style="left:1329.7px;top:323.5px;width:67.89999999999986px;height:19.399999999999977px;background:#fdfde2;"></div>
<div class="a" style="left:533px;top:341.9px;width:1103.4px;height:1.0px;background:#d8d8d8;"></div>
<div class="a" style="left:540.4px;top:328.0px;width:12.800000000000068px;height:11.0px;background:#ffffff;border:1.4px solid #202020;"></div>
<div class="a" style="left:557.5px;top:323.5px;width:187px;height:19px;overflow:hidden;"><span class="t" style="left:2.3px;top:4.19px;font-size:11.5px;line-height:12.85px;color:#282828;letter-spacing:-0.12px;transform:scaleX(0.94);transform-origin:0 0;">MUDAS DE GOIABA CORTIBEL RG X</span></div>
<span class="t" id="t126" style="left:756.75px;top:327.69px;font-size:11.5px;line-height:12.845px;font-weight:normal;color:#282828;letter-spacing:0.000px;">020</span>
<span class="t" id="t127" style="left:796.82px;top:327.69px;font-size:11.5px;line-height:12.845px;font-weight:normal;color:#282828;letter-spacing:0.667px;">6116</span>
<span class="t" id="t128" style="left:895.72px;top:327.69px;font-size:11.5px;line-height:12.845px;font-weight:normal;color:#282828;letter-spacing:0.252px;">06029089</span>
<span class="t" id="t129" style="left:1009.54px;top:327.69px;font-size:11.5px;line-height:12.845px;font-weight:normal;color:#282828;letter-spacing:0.541px;">0,00</span>
<span class="t" id="t130" style="left:1085.64px;top:327.69px;font-size:11.5px;line-height:12.845px;font-weight:normal;color:#282828;letter-spacing:0.541px;">0,00</span>
<span class="t" id="t131" style="left:1172.74px;top:327.69px;font-size:11.5px;line-height:12.845px;font-weight:normal;color:#282828;letter-spacing:0.541px;">0,00</span>
<span class="t" id="t132" style="left:1208.94px;top:327.69px;font-size:11.5px;line-height:12.845px;font-weight:normal;color:#ffffff;letter-spacing:0.000px;">01</span>
<span class="t" id="t133" style="left:1240.74px;top:327.69px;font-size:11.5px;line-height:12.845px;font-weight:normal;color:#1c2a40;letter-spacing:0.000px;">72</span>
<span class="t" id="t134" style="left:1349.92px;top:327.69px;font-size:11.5px;line-height:12.845px;font-weight:normal;color:#282828;letter-spacing:0.580px;">9017</span>
<span class="t" id="t135" style="left:1422.16px;top:327.69px;font-size:11.5px;line-height:12.845px;font-weight:normal;color:#282828;letter-spacing:0.347px;">1.410,00</span>
<span class="t" id="t136" style="left:1552.95px;top:327.69px;font-size:11.5px;line-height:12.845px;font-weight:normal;color:#282828;letter-spacing:0.404px;">169,20</span>
<span class="t" id="t137" style="left:1479.52px;top:327.69px;font-size:11.5px;line-height:12.845px;font-weight:normal;color:#282828;letter-spacing:0.263px;">12,00</span>
<div class="a" style="left:1200.6px;top:342.9px;width:31.40000000000009px;height:19.399999999999977px;background:#808080;"></div>
<div class="a" style="left:1232px;top:342.9px;width:32.40000000000009px;height:19.399999999999977px;background:#a3b8cf;"></div>
<div class="a" style="left:1329.7px;top:342.9px;width:67.89999999999986px;height:19.399999999999977px;background:#fdfde2;"></div>
<div class="a" style="left:533px;top:361.29999999999995px;width:1103.4px;height:1.0px;background:#d8d8d8;"></div>
<div class="a" style="left:540.4px;top:347.4px;width:12.800000000000068px;height:11.0px;background:#ffffff;border:1.4px solid #202020;"></div>
<div class="a" style="left:557.5px;top:342.9px;width:187px;height:19px;overflow:hidden;"><span class="t" style="left:2.3px;top:3.99px;font-size:11.5px;line-height:12.85px;color:#282828;letter-spacing:-0.12px;transform:scaleX(0.94);transform-origin:0 0;">MUDAS DE GOIABA SUPREMA X BRS</span></div>
<span class="t" id="t138" style="left:756.75px;top:346.89px;font-size:11.5px;line-height:12.845px;font-weight:normal;color:#282828;letter-spacing:0.000px;">020</span>
<span class="t" id="t139" style="left:796.82px;top:346.89px;font-size:11.5px;line-height:12.845px;font-weight:normal;color:#282828;letter-spacing:0.667px;">6116</span>
<span class="t" id="t140" style="left:895.72px;top:346.89px;font-size:11.5px;line-height:12.845px;font-weight:normal;color:#282828;letter-spacing:0.252px;">06029089</span>
<span class="t" id="t141" style="left:1009.54px;top:346.89px;font-size:11.5px;line-height:12.845px;font-weight:normal;color:#282828;letter-spacing:0.541px;">0,00</span>
<span class="t" id="t142" style="left:1085.64px;top:346.89px;font-size:11.5px;line-height:12.845px;font-weight:normal;color:#282828;letter-spacing:0.541px;">0,00</span>
<span class="t" id="t143" style="left:1172.74px;top:346.89px;font-size:11.5px;line-height:12.845px;font-weight:normal;color:#282828;letter-spacing:0.541px;">0,00</span>
<span class="t" id="t144" style="left:1208.94px;top:346.89px;font-size:11.5px;line-height:12.845px;font-weight:normal;color:#ffffff;letter-spacing:0.000px;">02</span>
<span class="t" id="t145" style="left:1240.74px;top:346.89px;font-size:11.5px;line-height:12.845px;font-weight:normal;color:#1c2a40;letter-spacing:0.000px;">72</span>
<span class="t" id="t146" style="left:1349.92px;top:346.89px;font-size:11.5px;line-height:12.845px;font-weight:normal;color:#282828;letter-spacing:0.580px;">9017</span>
<span class="t" id="t147" style="left:1422.16px;top:346.89px;font-size:11.5px;line-height:12.845px;font-weight:normal;color:#282828;letter-spacing:0.347px;">1.190,00</span>
<span class="t" id="t148" style="left:1552.95px;top:346.89px;font-size:11.5px;line-height:12.845px;font-weight:normal;color:#282828;letter-spacing:0.404px;">142,80</span>
<span class="t" id="t149" style="left:1479.52px;top:346.89px;font-size:11.5px;line-height:12.845px;font-weight:normal;color:#282828;letter-spacing:0.263px;">12,00</span>
<div class="a" style="left:557.0px;top:322.7px;width:1.0px;height:39.30000000000001px;background:#d8d8d8;"></div>
<div class="a" style="left:744.5px;top:322.7px;width:1.0px;height:39.30000000000001px;background:#d8d8d8;"></div>
<div class="a" style="left:788.5px;top:322.7px;width:1.0px;height:39.30000000000001px;background:#d8d8d8;"></div>
<div class="a" style="left:832.5px;top:322.7px;width:1.0px;height:39.30000000000001px;background:#d8d8d8;"></div>
<div class="a" style="left:889.5px;top:322.7px;width:1.0px;height:39.30000000000001px;background:#d8d8d8;"></div>
<div class="a" style="left:956.1px;top:322.7px;width:1.0px;height:39.30000000000001px;background:#d8d8d8;"></div>
<div class="a" style="left:1036.5px;top:322.7px;width:1.0px;height:39.30000000000001px;background:#d8d8d8;"></div>
<div class="a" style="left:1113.2px;top:322.7px;width:1.0px;height:39.30000000000001px;background:#d8d8d8;"></div>
<div class="a" style="left:1200.1px;top:322.7px;width:1.0px;height:39.30000000000001px;background:#d8d8d8;"></div>
<div class="a" style="left:1231.5px;top:322.7px;width:1.0px;height:39.30000000000001px;background:#d8d8d8;"></div>
<div class="a" style="left:1263.9px;top:322.7px;width:1.0px;height:39.30000000000001px;background:#d8d8d8;"></div>
<div class="a" style="left:1329.2px;top:322.7px;width:1.0px;height:39.30000000000001px;background:#d8d8d8;"></div>
<div class="a" style="left:1397.1px;top:322.7px;width:1.0px;height:39.30000000000001px;background:#d8d8d8;"></div>
<div class="a" style="left:1473.2px;top:322.7px;width:1.0px;height:39.30000000000001px;background:#d8d8d8;"></div>
<div class="a" style="left:1516.2px;top:322.7px;width:1.0px;height:39.30000000000001px;background:#d8d8d8;"></div>
<div class="a" style="left:1594.0px;top:322.7px;width:1.0px;height:39.30000000000001px;background:#d8d8d8;"></div>
<div class="a" style="left:1635.9px;top:322.7px;width:1.0px;height:39.30000000000001px;background:#d8d8d8;"></div>
<div class="a" style="left:557px;top:322.7px;width:1px;height:39.30000000000001px;background:#d8d8d8;"></div>
<div class="a" style="left:531px;top:510px;width:1127px;height:1px;background:#aab5c0;"></div>
<div class="a" style="left:531px;top:545.5px;width:1127px;height:1.2000000000000455px;background:#aab5c0;"></div>
<div class="a" style="left:531px;top:547px;width:1127px;height:1px;background:#d6dee7;"></div>
<div class="a" style="left:536px;top:516.8px;width:144px;height:22.90000000000009px;background:#fcfcfc;border-radius:3px;box-shadow:0 1px 0 rgba(120,130,140,0.35);"></div>
<div class="a" style="left:687px;top:516.8px;width:144px;height:22.90000000000009px;background:#fcfcfc;border-radius:3px;box-shadow:0 1px 0 rgba(120,130,140,0.35);"></div>
<div class="a" style="left:839px;top:516.8px;width:144px;height:22.90000000000009px;background:#fcfcfc;border-radius:3px;box-shadow:0 1px 0 rgba(120,130,140,0.35);"></div>
<div class="a" style="left:990.8px;top:516.8px;width:143.5px;height:22.90000000000009px;background:#fcfcfc;border-radius:3px;box-shadow:0 1px 0 rgba(120,130,140,0.35);"></div>
<div class="a" style="left:1143.4px;top:516.8px;width:140.19999999999982px;height:22.90000000000009px;background:#fcfcfc;border-radius:3px;box-shadow:0 1px 0 rgba(120,130,140,0.35);"></div>
<div class="a" style="left:1296.5px;top:517px;width:356.5px;height:23px;background:#bfcedc;border:1px solid #dfe6ee;border-bottom-color:#eef2f6;"></div>
<span class="t" id="t150" style="left:538.62px;top:522.59px;font-size:13.6px;line-height:15.191px;font-weight:normal;color:#1a1a1a;letter-spacing:0.858px;">Produto por seleção</span>
<span class="t" id="t151" style="left:688.12px;top:522.59px;font-size:13.6px;line-height:15.191px;font-weight:normal;color:#1a1a1a;letter-spacing:0.135px;">Localizar GNRE/DARE</span>
<span class="t" id="t152" style="left:871.27px;top:521.98px;font-size:12.5px;line-height:13.963px;font-weight:bold;color:#1a1a1a;letter-spacing:1.004px;">Alterar CLS</span>
<span class="t" id="t153" style="left:1006.38px;top:521.98px;font-size:12.5px;line-height:13.963px;font-weight:bold;color:#1a1a1a;letter-spacing:1.043px;">Reclassificar NF</span>
<span class="t" id="t154" style="left:1147.57px;top:521.89px;font-size:12.6px;line-height:14.074px;font-weight:normal;color:#1a1a1a;letter-spacing:0.539px;">Alterar Movimento NF</span>
<div class="a" style="left:531px;top:570px;width:1127px;height:1px;background:#cfd9e3;"></div>
<span class="t" id="t155" style="left:540.70px;top:566.74px;font-size:12px;line-height:13.404px;font-weight:bold;color:#101828;letter-spacing:-0.084px;">| LANÇAMENTOS|</span>
<div class="a" style="left:531px;top:580px;width:1126px;height:2px;background:#b6bec7;"></div>
<div class="a" style="left:533px;top:582px;width:1122px;height:87px;background:#ffffff;"></div>
<div class="a" style="left:533px;top:582px;width:14.5px;height:40.0px;background:#f0f0f0;"></div>
<div class="a" style="left:547.5px;top:582px;width:900.8px;height:20.5px;background:#c9ddc9;border-top:1.5px solid #f6f8f6;"></div>
<div class="a" style="left:533px;top:602.0px;width:915.3px;height:1.5px;background:#3a3a3a;"></div>
<div class="a" style="left:547.0px;top:582px;width:1.2000000000000455px;height:40.0px;background:#3c3c3c;"></div>
<div class="a" style="left:669.0px;top:582px;width:1.2000000000000455px;height:20.5px;background:#3c3c3c;"></div>
<div class="a" style="left:724.5px;top:582px;width:1.2000000000000455px;height:20.5px;background:#3c3c3c;"></div>
<div class="a" style="left:854.5px;top:582px;width:1.2000000000000455px;height:20.5px;background:#3c3c3c;"></div>
<div class="a" style="left:1060.5px;top:582px;width:1.2000000000000455px;height:20.5px;background:#3c3c3c;"></div>
<div class="a" style="left:1191.9px;top:582px;width:1.2000000000000455px;height:20.5px;background:#3c3c3c;"></div>
<div class="a" style="left:1208.5px;top:582px;width:1.2000000000000455px;height:20.5px;background:#3c3c3c;"></div>
<div class="a" style="left:1328.1px;top:582px;width:1.2000000000000455px;height:20.5px;background:#3c3c3c;"></div>
<div class="a" style="left:1447.8px;top:582px;width:1.2000000000000455px;height:20.5px;background:#3c3c3c;"></div>
<div class="a" style="left:547.5px;top:603.5px;width:900.8px;height:18.5px;background:#0078d7;"></div>
<div class="a" style="left:669.0px;top:603.5px;width:1.0px;height:18.5px;background:#5aa0e0;"></div>
<div class="a" style="left:724.5px;top:603.5px;width:1.0px;height:18.5px;background:#5aa0e0;"></div>
<div class="a" style="left:854.5px;top:603.5px;width:1.0px;height:18.5px;background:#5aa0e0;"></div>
<div class="a" style="left:1060.5px;top:603.5px;width:1.0px;height:18.5px;background:#5aa0e0;"></div>
<div class="a" style="left:1191.9px;top:603.5px;width:1.0px;height:18.5px;background:#5aa0e0;"></div>
<div class="a" style="left:1208.5px;top:603.5px;width:1.0px;height:18.5px;background:#5aa0e0;"></div>
<div class="a" style="left:1328.1px;top:603.5px;width:1.0px;height:18.5px;background:#5aa0e0;"></div>
<div class="a" style="left:533px;top:620.8px;width:14.5px;height:1.5px;background:#3a3a3a;"></div>
<svg class="a" style="left:535.5px;top:606.5px" width="8" height="12" viewBox="0 0 8 12"><path d="M1 0.5 L7.5 6 L1 11.5 Z" fill="#000"/></svg>
<span class="t" id="t156" style="left:588.32px;top:587.39px;font-size:11.5px;line-height:12.845px;font-weight:normal;color:#283428;letter-spacing:-0.142px;">Nº NDF</span>
<span class="t" id="t157" style="left:684.82px;top:587.39px;font-size:11.5px;line-height:12.845px;font-weight:normal;color:#283428;letter-spacing:0.127px;">Tipo</span>
<span class="t" id="t158" style="left:735.42px;top:587.39px;font-size:11.5px;line-height:12.845px;font-weight:normal;color:#283428;letter-spacing:-0.197px;">Última Guia Vinculada</span>
<span class="t" id="t159" style="left:922.22px;top:587.39px;font-size:11.5px;line-height:12.845px;font-weight:normal;color:#283428;letter-spacing:-0.026px;">Situação Guia</span>
<span class="t" id="t160" style="left:1084.02px;top:587.39px;font-size:11.5px;line-height:12.845px;font-weight:normal;color:#283428;letter-spacing:-0.018px;">Tipo Pagamento</span>
<span class="t" id="t161" style="left:1196.94px;top:587.39px;font-size:11.5px;line-height:12.845px;font-weight:normal;color:#283428;letter-spacing:0.000px;">C</span>
<span class="t" id="t162" style="left:1239.12px;top:587.39px;font-size:11.5px;line-height:12.845px;font-weight:normal;color:#283428;letter-spacing:0.003px;">Vencimento</span>
<span class="t" id="t163" style="left:1338.41px;top:587.12px;font-size:11.8px;line-height:13.181px;font-weight:bold;color:#1c241c;letter-spacing:0.534px;">Valor a Recolher</span>
<div class="a" style="left:531px;top:669.5px;width:1127px;height:1.0px;background:#aab5c0;"></div>
<span class="t" id="t164" style="left:540.70px;top:674.04px;font-size:12px;line-height:13.404px;font-weight:bold;color:#101828;letter-spacing:-0.114px;">| ITENS DO LANÇAMENTO|</span>
<div class="a" style="left:696px;top:680px;width:632px;height:1px;background:#cfd9e3;"></div>
<div class="a" style="left:1328.4px;top:675px;width:118.59999999999991px;height:14.299999999999955px;background:#ffffff;border-radius:3px;"></div>
<span class="t" id="t165" style="left:1329.83px;top:677.69px;font-size:11.5px;line-height:12.845px;font-weight:normal;color:#3030f0;letter-spacing:-0.004px;">Consultar Lançamento</span>
<div class="a" style="left:531px;top:689px;width:1126px;height:1.5px;background:#b6bec7;"></div>
<div class="a" style="left:533px;top:690.5px;width:1122px;height:76.5px;background:#ffffff;"></div>
<div class="a" style="left:533px;top:691px;width:14.399999999999977px;height:37.60000000000002px;background:#f0f0f0;"></div>
<div class="a" style="left:547.4px;top:691px;width:901.6px;height:18px;background:#c9ddc9;border-top:1.5px solid #f6f8f6;"></div>
<div class="a" style="left:599.3px;top:692.5px;width:55.30000000000007px;height:16.5px;background:#fdfbe0;"></div>
<div class="a" style="left:533px;top:708.5px;width:916px;height:1.5px;background:#3a3a3a;"></div>
<div class="a" style="left:546.9px;top:691px;width:1.2000000000000455px;height:37.60000000000002px;background:#3c3c3c;"></div>
<div class="a" style="left:598.8px;top:691px;width:1.2000000000000455px;height:18px;background:#3c3c3c;"></div>
<div class="a" style="left:654.1px;top:691px;width:1.2000000000000455px;height:18px;background:#3c3c3c;"></div>
<div class="a" style="left:970.3px;top:691px;width:1.2000000000000455px;height:18px;background:#3c3c3c;"></div>
<div class="a" style="left:1089.9px;top:691px;width:1.2000000000000455px;height:18px;background:#3c3c3c;"></div>
<div class="a" style="left:1209.3px;top:691px;width:1.2000000000000455px;height:18px;background:#3c3c3c;"></div>
<div class="a" style="left:1328.7px;top:691px;width:1.2000000000000455px;height:18px;background:#3c3c3c;"></div>
<div class="a" style="left:1448.5px;top:691px;width:1.2000000000000455px;height:18px;background:#3c3c3c;"></div>
<div class="a" style="left:547.4px;top:710px;width:901.6px;height:18.600000000000023px;background:#0078d7;"></div>
<div class="a" style="left:598.8px;top:710px;width:1.0px;height:18.600000000000023px;background:#5aa0e0;"></div>
<div class="a" style="left:654.1px;top:710px;width:1.0px;height:18.600000000000023px;background:#5aa0e0;"></div>
<div class="a" style="left:970.3px;top:710px;width:1.0px;height:18.600000000000023px;background:#5aa0e0;"></div>
<div class="a" style="left:1089.9px;top:710px;width:1.0px;height:18.600000000000023px;background:#5aa0e0;"></div>
<div class="a" style="left:1209.3px;top:710px;width:1.0px;height:18.600000000000023px;background:#5aa0e0;"></div>
<div class="a" style="left:1328.7px;top:710px;width:1.0px;height:18.600000000000023px;background:#5aa0e0;"></div>
<div class="a" style="left:533px;top:727.4px;width:14.399999999999977px;height:1.5px;background:#3a3a3a;"></div>
<svg class="a" style="left:535.5px;top:713.0px" width="8" height="12" viewBox="0 0 8 12"><path d="M1 0.5 L7.5 6 L1 11.5 Z" fill="#000"/></svg>
<span class="t" id="t166" style="left:561.22px;top:695.09px;font-size:11.5px;line-height:12.845px;font-weight:normal;color:#283428;letter-spacing:0.261px;">Tipo</span>
<span class="t" id="t167" style="left:605.62px;top:695.09px;font-size:11.5px;line-height:12.845px;font-weight:normal;color:#283428;letter-spacing:0.292px;">Produto</span>
<span class="t" id="t168" style="left:756.02px;top:695.09px;font-size:11.5px;line-height:12.845px;font-weight:normal;color:#283428;letter-spacing:-0.008px;">Descrição do Produto</span>
<span class="t" id="t169" style="left:995.02px;top:695.09px;font-size:11.5px;line-height:12.845px;font-weight:normal;color:#283428;letter-spacing:0.106px;">Valor Produto</span>
<span class="t" id="t170" style="left:1117.33px;top:695.09px;font-size:11.5px;line-height:12.845px;font-weight:normal;color:#283428;letter-spacing:0.118px;">Valor Débito</span>
<span class="t" id="t171" style="left:1234.72px;top:695.09px;font-size:11.5px;line-height:12.845px;font-weight:normal;color:#283428;letter-spacing:0.131px;">Valor Crédito</span>
<span class="t" id="t172" style="left:1346.02px;top:695.09px;font-size:11.5px;line-height:12.845px;font-weight:normal;color:#283428;letter-spacing:-0.052px;">Valor a Recolher</span>
<div class="a" style="left:10px;top:767px;width:1650px;height:1.2000000000000455px;background:#9faab5;"></div>
<div class="a" style="left:10px;top:768.5px;width:1650px;height:1.0px;background:#d6dee7;"></div>
<div class="a" style="left:10px;top:777px;width:1650px;height:1px;background:#d0dae4;"></div>
<span class="t" id="t173" style="left:19.40px;top:775.04px;font-size:12px;line-height:13.404px;font-weight:bold;color:#101828;letter-spacing:-0.242px;">| TABELA DE CÁLCULO DOS ITENS|</span>
<div class="a" style="left:227px;top:774.5px;width:192px;height:13.0px;background:#ffffff;border-radius:3px;"></div>
<span class="t" id="t174" style="left:235.00px;top:776.24px;font-size:12px;line-height:13.404px;font-weight:normal;color:#2a2ae0;letter-spacing:-0.033px;">Totalizador por Alíq. Interestadual</span>
<div class="a" style="left:12px;top:789.5px;width:1646px;height:89.5px;background:#ffffff;"></div>
<div class="a" style="left:124.5px;top:789.5px;width:2.0px;height:89.5px;background:#a8a8a8;"></div>
<div class="a" style="left:126.5px;top:860.5px;width:1531.5px;height:18.5px;background:#f0f0f0;"></div>
<div class="a" style="left:145px;top:868px;width:18.5px;height:1.7000000000000455px;background:#6e6e6e;"></div>
<div class="a" style="left:13px;top:789.5px;width:12px;height:38.5px;background:#f0f0f0;"></div>
<div class="a" style="left:25px;top:789.5px;width:79px;height:19.200000000000045px;background:#c9ddc9;border-top:1.5px solid #f6f8f6;"></div>
<div class="a" style="left:25px;top:791.0px;width:79px;height:17.700000000000045px;background:#fdfbe0;"></div>
<div class="a" style="left:13px;top:808.2px;width:91px;height:1.5px;background:#3a3a3a;"></div>
<div class="a" style="left:24.5px;top:789.5px;width:1.1999999999999993px;height:38.5px;background:#3c3c3c;"></div>
<div class="a" style="left:57.0px;top:789.5px;width:1.2000000000000028px;height:19.200000000000045px;background:#3c3c3c;"></div>
<div class="a" style="left:103.5px;top:789.5px;width:1.2000000000000028px;height:19.200000000000045px;background:#3c3c3c;"></div>
<div class="a" style="left:25px;top:809.7px;width:79px;height:18.299999999999955px;background:#0078d7;"></div>
<div class="a" style="left:57.0px;top:809.7px;width:1.0px;height:18.299999999999955px;background:#5aa0e0;"></div>
<div class="a" style="left:13px;top:826.8px;width:12px;height:1.5px;background:#3a3a3a;"></div>
<svg class="a" style="left:15.5px;top:812.7px" width="8" height="12" viewBox="0 0 8 12"><path d="M1 0.5 L7.5 6 L1 11.5 Z" fill="#000"/></svg>
<span class="t" id="t175" style="left:28.23px;top:794.99px;font-size:11.5px;line-height:12.845px;font-weight:normal;color:#283428;letter-spacing:0.653px;">Item</span>
<span class="t" id="t176" style="left:59.62px;top:794.99px;font-size:11.5px;line-height:12.845px;font-weight:normal;color:#283428;letter-spacing:0.142px;">Produto</span>
<div class="a" style="left:127px;top:789.5px;width:12.5px;height:38.5px;background:#f0f0f0;"></div>
<div class="a" style="left:139px;top:789.5px;width:1.1999999999999886px;height:38.5px;background:#3c3c3c;"></div>
<div class="a" style="left:127px;top:808px;width:12.5px;height:1.5px;background:#3a3a3a;"></div>
<div class="a" style="left:127px;top:826.8px;width:12.5px;height:1.5px;background:#3a3a3a;"></div>
<svg class="a" style="left:129.5px;top:812.5px" width="8" height="12" viewBox="0 0 8 12"><path d="M1 0.5 L7.5 6 L1 11.5 Z" fill="#000"/></svg>
<div class="a" style="left:1655.5px;top:304px;width:1.5px;height:206px;background:#c4ccd4;"></div>
<div class="a" style="left:1655.5px;top:582px;width:1.5px;height:87.5px;background:#c4ccd4;"></div>
<div class="a" style="left:1655.5px;top:690.5px;width:1.5px;height:76.5px;background:#c4ccd4;"></div>
<div class="a" style="left:1655.5px;top:789.5px;width:1.5px;height:89.5px;background:#c4ccd4;"></div>
<svg class="a" style="left:0;top:0" width="1755" height="879" viewBox="0 0 1755 879">
<ellipse cx="1623" cy="225.5" rx="130.5" ry="96.5" fill="none" stroke="#e41c1c" stroke-width="2.2"/>
<line x1="1219" y1="680.5" x2="1641" y2="228" stroke="#e41c1c" stroke-width="2.2"/>
<path d="M1648 220.5 L1637.5 224.5 L1644.5 231.5 Z" fill="#e41c1c" stroke="#e41c1c" stroke-width="1.5" stroke-linejoin="round"/>
</svg>
<svg class="a" style="left:399px;top:474px" width="22" height="28" viewBox="0 0 22 28">
<path d="M1.9 1.6 L1.9 22.4 L6.8 18.1 L9.5 24.3 L13.4 22.4 L10.9 16.9 L17.3 16.8 Z" fill="#1ebdf5" stroke="#000" stroke-width="1.5" stroke-linejoin="round"/>
</svg></body></html>
